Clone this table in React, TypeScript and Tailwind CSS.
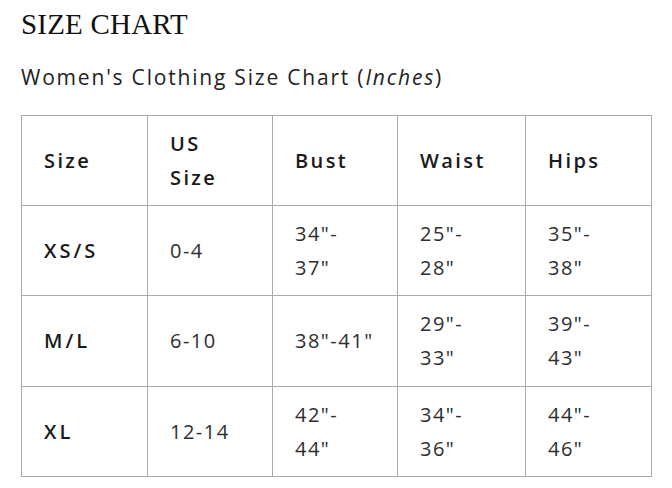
const headers = ["Size", ["US", "Size"], "Bust", "Waist", "Hips"];

const rows: (string | string[])[][] = [
  ["XS/S", "0-4", ['34"-', '37"'], ['25"-', '28"'], ['35"-', '38"']],
  ["M/L", "6-10", '38"-41"', ['29"-', '33"'], ['39"-', '43"']],
  ["XL", "12-14", ['42"-', '44"'], ['34"-', '36"'], ['44"-', '46"']],
];

function Lines({ value }: { value: string | string[] }) {
  const lines = Array.isArray(value) ? value : [value];
  return (
    <>
      {lines.map((line, i) => (
        <span key={i} className="block">
          {line}
        </span>
      ))}
    </>
  );
}

export default function App() {
  return (
    <div className="min-h-screen bg-white px-[21px] pt-[6px] text-[#1c1c1c] [font-family:'Open_Sans',sans-serif]">
      <h1 className="text-[29px] leading-[36px] tracking-[0.2px] text-[#111] [font-family:'Liberation_Serif',serif]">
        SIZE CHART
      </h1>
      <p className="mt-[20px] text-[21px] leading-[30px] tracking-[1.8px] text-[#222]">
        Women's Clothing Size Chart (<em>Inches</em>)
      </p>
      <table className="mt-[23px] w-[630px] table-fixed border-collapse">
        <colgroup>
          <col className="w-[126px]" />
          <col className="w-[125px]" />
          <col className="w-[125px]" />
          <col className="w-[128px]" />
          <col className="w-[126px]" />
        </colgroup>
        <thead>
          <tr>
            {headers.map((h, i) => (
              <th
                key={i}
                className="h-[90px] border border-[#aaa] px-[22px] text-left align-middle text-[20px] font-semibold leading-[34px] tracking-[2.4px] text-[#1a1a1a]"
              >
                <Lines value={h} />
              </th>
            ))}
          </tr>
        </thead>
        <tbody>
          {rows.map((row, r) => (
            <tr key={r}>
              {row.map((cell, c) => (
                <td
                  key={c}
                  className={`border border-[#aaa] px-[22px] align-middle text-[20px] leading-[34px] ${
                    r === 1 ? "h-[91px]" : "h-[90px]"
                  } ${c === 0 ? "font-semibold tracking-[3px] text-[#1a1a1a]" : "tracking-[1.5px] text-[#2e2e2e]"}`}
                >
                  <Lines value={cell} />
                </td>
              ))}
            </tr>
          ))}
        </tbody>
      </table>
    </div>
  );
}
